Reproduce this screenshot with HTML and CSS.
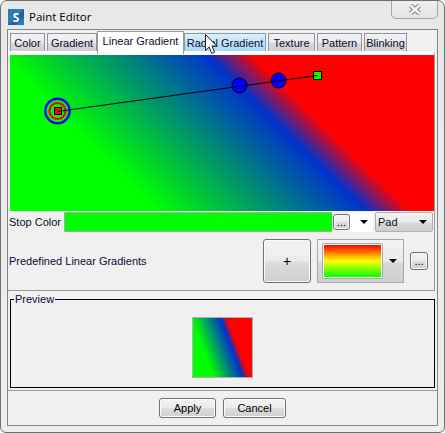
FILE: index.html
```html
<!DOCTYPE html>
<html lang="en">
<head>
    <meta charset="UTF-8">
    <title>Paint Editor</title>
    <link rel="stylesheet" href="styles.css">
</head>
<body>
    <div class="window">
        <div class="titlebar">
            <svg class="app-icon" width="16" height="16" viewBox="0 0 16 16">
                <rect width="16" height="16" fill="#2a7db5"/>
                <path d="M0 16 L16 0 L16 8 L8 16 Z" fill="#1f6199"/>
                <text x="8" y="12.5" text-anchor="middle" class="app-icon-letter">S</text>
            </svg>
            <span class="title">Paint Editor</span>
            <div class="close">
                <svg width="16" height="13" viewBox="0 0 16 13">
                    <path d="M3.5 2.5 L12.5 10.5 M12.5 2.5 L3.5 10.5" stroke="#7d8288" stroke-width="4.4" fill="none"/>
                    <path d="M3.5 2.5 L12.5 10.5 M12.5 2.5 L3.5 10.5" stroke="#f4f4f4" stroke-width="2.4" fill="none"/>
                </svg>
            </div>
        </div>

        <div class="client">
            <div class="tabs">
                <div class="tab tab-color">Color</div>
                <div class="tab tab-gradient">Gradient</div>
                <div class="tab tab-linear active">Linear Gradient</div>
                <div class="tab tab-radial hover">Radial Gradient</div>
                <div class="tab tab-texture">Texture</div>
                <div class="tab tab-pattern">Pattern</div>
                <div class="tab tab-blinking">Blinking</div>
            </div>

            <div class="tab-body">
                <!-- gradient editor -->
                <svg class="canvas" width="424" height="156" viewBox="0 0 424 156">
                    <defs>
                        <linearGradient id="paint" x1="0.111" y1="0.362" x2="0.724" y2="0.131">
                            <stop offset="0" stop-color="#00ff00"/>
                            <stop offset="0.7" stop-color="#0033cc"/>
                            <stop offset="0.85" stop-color="#ff0000"/>
                            <stop offset="1" stop-color="#ff0000"/>
                        </linearGradient>
                    </defs>
                    <rect width="424" height="156" fill="url(#paint)"/>
                    <circle cx="47.5" cy="56" r="12.2" fill="none" stroke="#0000ff" stroke-width="2.4"/>
                    <circle cx="47.5" cy="56" r="8" fill="none" stroke="#ff0000" stroke-width="2.2"/>
                    <rect x="44.5" y="52.5" width="7" height="7" fill="#ff0000" stroke="#000"/>
                    <circle cx="229.5" cy="30.5" r="7.5" fill="#0000ff" stroke="#000"/>
                    <circle cx="268.5" cy="25.5" r="7.5" fill="#0000ff" stroke="#000"/>
                    <rect x="303.5" y="16.5" width="8" height="8" fill="#00ff00" stroke="#000"/>
                    <line x1="47.5" y1="56.5" x2="307.5" y2="20.5" stroke="#000"/>
                </svg>

                <div class="stop-row">
                    <span class="label stop-label">Stop Color</span>
                    <div class="stop-swatch"></div>
                    <button class="btn dots dots-stop">...</button>
                    <div class="arrow-box"><span class="arrow"></span></div>
                    <div class="combo-pad">
                        <span>Pad</span>
                        <span class="arrow"></span>
                    </div>
                </div>

                <div class="predefined-row">
                    <span class="label predefined-label">Predefined Linear Gradients</span>
                    <button class="btn plus">+</button>
                    <div class="combo-gradient">
                        <div class="predefined-swatch"></div>
                        <span class="arrow"></span>
                    </div>
                    <button class="btn dots dots-predefined">...</button>
                </div>
            </div>

            <div class="preview-section">
                <fieldset class="preview">
                    <legend>Preview</legend>
                    <svg class="preview-swatch" width="61" height="61" viewBox="0 0 61 61">
                        <rect x="0.5" y="0.5" width="60" height="60" fill="url(#paint)" stroke="#b0b0b0"/>
                    </svg>
                </fieldset>
            </div>

            <div class="actions">
                <button class="btn action action-apply">Apply</button>
                <button class="btn action action-cancel">Cancel</button>
            </div>
        </div>

        <svg class="cursor" width="13" height="21" viewBox="0 0 13 21">
            <path d="M0.5 0.5 L0.5 16.5 L4.2 13 L6.8 19.5 L9.6 18.3 L7 12 L11.8 12 Z" fill="#fff" stroke="#222"/>
        </svg>
    </div>
</body>
</html>
```

FILE: styles.css
```css
* {
    box-sizing: border-box;
}
body {
    margin: 0;
    background: #fff;
    font-family: "Liberation Sans", sans-serif;
    font-size: 11px;
    color: #0c0c30;
}
.window {
    position: relative;
    width: 445px;
    height: 433px;
    background: linear-gradient(#e6e8ea, #eeeeee);
    border: 1px solid #6e6e6e;
    border-radius: 7px 7px 6px 6px;
    overflow: hidden;
}
.titlebar {
    display: flex;
    height: 28px;
    padding-left: 7px;
    padding-right: 6px;
    align-items: center;
}
.app-icon {
    flex: none;
    margin-top: 4px;
}
.app-icon-letter {
    font-family: "Open Sans", sans-serif;
    font-size: 12px;
    font-weight: 700;
    fill: #fff;
}
.title {
    margin-left: 5px;
    margin-top: 2px;
    font-family: "Open Sans", sans-serif;
    font-size: 11.5px;
    color: #000;
}
.close {
    display: flex;
    align-items: center;
    justify-content: center;
    align-self: flex-start;
    width: 47px;
    height: 19px;
    margin-left: auto;
    margin-top: -1px;
    border: 1px solid #a4a6a8;
    border-top: none;
    border-radius: 0 0 5px 5px;
    background: linear-gradient(#f0f0f0, #e4e4e4);
}
.client {
    width: 431px;
    height: 397px;
    margin-left: 6px;
    background: #f0f0f0;
    border: 1px solid #858585;
}
.tabs {
    display: flex;
    align-items: flex-end;
    height: 21px;
    padding-left: 2px;
    background: #f0f0f0;
}
.tab {
    display: flex;
    align-items: center;
    justify-content: center;
    height: 18px;
    margin-right: 2px;
    border: 1px solid #8f959b;
    border-bottom: none;
    background: linear-gradient(#f2f2f2 0%, #ebebeb 50%, #d8d8d8 55%, #cfcfcf 100%);
    white-space: nowrap;
}
.tab.active {
    height: 23px;
    margin-bottom: -3px;
    margin-right: 0;
    padding-bottom: 4px;
    background: #fff;
    border-color: #9a9a9a;
    position: relative;
}
.tab.hover {
    background: linear-gradient(#dcf0fc 0%, #c0e3f9 50%, #a8d8f6 100%);
    border-color: #7f9db5;
}
.tab-color { width: 35px; }
.tab-gradient { width: 50px; margin-right: 0; }
.tab-linear { width: 87px; }
.tab-radial { width: 82px; }
.tab-texture { width: 47px; }
.tab-pattern { width: 45px; }
.tab-blinking { width: 43px; }
.tab-body {
    width: 427px;
    height: 240px;
    padding-left: 1px;
    padding-bottom: 1px;
    border-top: 4px solid #fff;
    border-right: 1px solid #9a9a9a;
    border-bottom: 1px solid #9a9a9a;
}
.canvas {
    display: block;
    margin-left: 1px;
}
.stop-row {
    display: flex;
    height: 21px;
    margin-top: 1px;
}
.label {
    white-space: nowrap;
}
.stop-label {
    width: 55px;
    line-height: 20px;
}
.stop-swatch {
    width: 268px;
    height: 20px;
    margin-right: 1px;
    background: #00ff00;
    border: 1px solid #a8a8a8;
    border-right: none;
}
.btn {
    padding: 0;
    font: inherit;
    color: #000;
    border: 1px solid #707070;
    border-radius: 3px;
    background: linear-gradient(#f3f3f3 0%, #ebebeb 50%, #dddddd 52%, #cfcfcf 100%);
    box-shadow: inset 0 0 0 1px #fbfbfb;
}
.dots {
    line-height: 14px;
}
.dots-stop {
    width: 17px;
    height: 16px;
    margin-top: 2px;
}
.arrow-box {
    display: flex;
    align-items: center;
    justify-content: flex-end;
    width: 23px;
    height: 20px;
    padding-right: 5px;
    margin-right: 2px;
    background: #fff;
}
.arrow {
    display: block;
    width: 0;
    height: 0;
    border-left: 4px solid transparent;
    border-right: 4px solid transparent;
    border-top: 4px solid #000;
}
.combo-pad {
    display: flex;
    align-items: center;
    justify-content: space-between;
    width: 58px;
    height: 20px;
    padding: 0 5px 0 2px;
    border: 1px solid #b0b0b0;
    border-radius: 2px;
    background: linear-gradient(#f2f2f2 0%, #ebebeb 50%, #d8d8d8 55%, #cfcfcf 100%);
}
.predefined-row {
    display: flex;
    align-items: center;
    height: 56px;
}
.predefined-label {
    width: 254px;
}
.plus {
    width: 48px;
    height: 44px;
    margin-right: 6px;
    font-size: 14px;
}
.combo-gradient {
    display: flex;
    align-items: center;
    width: 87px;
    height: 44px;
    padding: 0 6px 0 4px;
    justify-content: space-between;
    border: 1px solid #a8a8a8;
    background: linear-gradient(#f2f2f2 0%, #ebebeb 50%, #d8d8d8 55%, #cfcfcf 100%);
}
.predefined-swatch {
    width: 61px;
    height: 36px;
    border: 1px solid #a8a8a8;
    border-radius: 2px;
    box-shadow: inset 0 0 0 1px #fff;
    background: linear-gradient(#ff0000 3%, #ffff00 50%, #00ff00 97%);
}
.dots-predefined {
    width: 18px;
    height: 18px;
    margin-left: 6px;
}
.preview-section {
    height: 99px;
    padding-top: 1px;
    padding-left: 2px;
}
.preview {
    display: block;
    width: 425px;
    height: 96px;
    margin: 0;
    padding: 11px 0 0;
    border: 1px solid #000;
    text-align: center;
}
.preview legend {
    margin-left: 3px;
    padding: 0 1px;
    line-height: 14px;
    text-align: left;
}
.preview-swatch {
    display: inline-block;
    vertical-align: top;
}
.actions {
    display: flex;
    justify-content: center;
    gap: 7px;
    height: 34px;
    padding-top: 7px;
    border-top: 1px solid #9a9a9a;
}
.action {
    height: 20px;
}
.action-apply { width: 57px; }
.action-cancel { width: 63px; }
.cursor {
    position: absolute;
    left: 204px;
    top: 33px;
}
```
